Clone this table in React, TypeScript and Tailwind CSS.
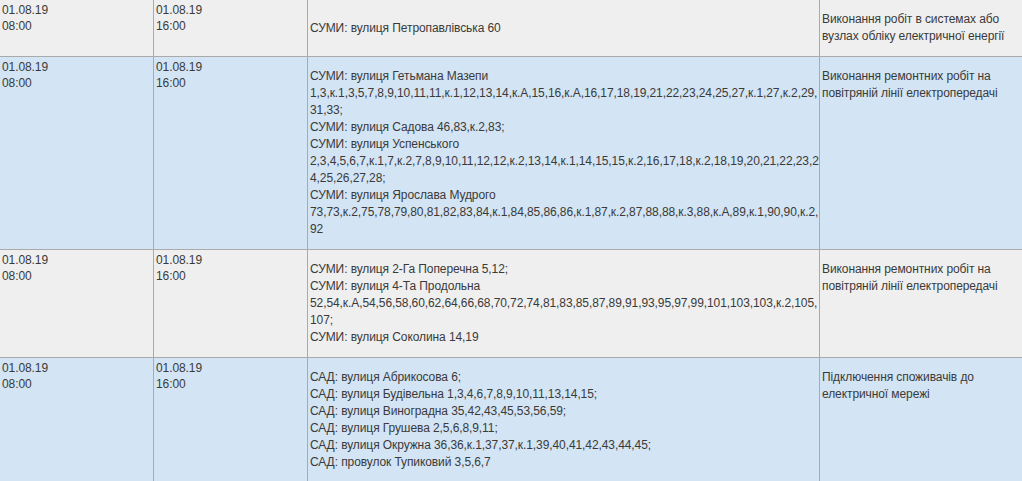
import React from 'react';

type Outage = {
  start: [string, string];
  end: [string, string];
  addresses: string[];
  work: string;
};

const outages: Outage[] = [
  {
    start: ['01.08.19', '08:00'],
    end: ['01.08.19', '16:00'],
    addresses: ['СУМИ: вулиця Петропавлівська 60'],
    work: 'Виконання робіт в системах або вузлах обліку електричної енергії',
  },
  {
    start: ['01.08.19', '08:00'],
    end: ['01.08.19', '16:00'],
    addresses: [
      'СУМИ: вулиця Гетьмана Мазепи',
      '1,3,к.1,3,5,7,8,9,10,11,11,к.1,12,13,14,к.А,15,16,к.А,16,17,18,19,21,22,23,24,25,27,к.1,27,к.2,29,',
      '31,33;',
      'СУМИ: вулиця Садова 46,83,к.2,83;',
      'СУМИ: вулиця Успенського',
      '2,3,4,5,6,7,к.1,7,к.2,7,8,9,10,11,12,12,к.2,13,14,к.1,14,15,15,к.2,16,17,18,к.2,18,19,20,21,22,23,2',
      '4,25,26,27,28;',
      'СУМИ: вулиця Ярослава Мудрого',
      '73,73,к.2,75,78,79,80,81,82,83,84,к.1,84,85,86,86,к.1,87,к.2,87,88,88,к.3,88,к.А,89,к.1,90,90,к.2,',
      '92',
    ],
    work: 'Виконання ремонтних робіт на повітряній лінії електропередачі',
  },
  {
    start: ['01.08.19', '08:00'],
    end: ['01.08.19', '16:00'],
    addresses: [
      'СУМИ: вулиця 2-Га Поперечна 5,12;',
      'СУМИ: вулиця 4-Та Продольна',
      '52,54,к.А,54,56,58,60,62,64,66,68,70,72,74,81,83,85,87,89,91,93,95,97,99,101,103,103,к.2,105,',
      '107;',
      'СУМИ: вулиця Соколина 14,19',
    ],
    work: 'Виконання ремонтних робіт на повітряній лінії електропередачі',
  },
  {
    start: ['01.08.19', '08:00'],
    end: ['01.08.19', '16:00'],
    addresses: [
      'САД: вулиця Абрикосова 6;',
      'САД: вулиця Будівельна 1,3,4,6,7,8,9,10,11,13,14,15;',
      'САД: вулиця Виноградна 35,42,43,45,53,56,59;',
      'САД: вулиця Грушева 2,5,6,8,9,11;',
      'САД: вулиця Окружна 36,36,к.1,37,37,к.1,39,40,41,42,43,44,45;',
      'САД: провулок Тупиковий 3,5,6,7',
    ],
    work: 'Підключення споживачів до електричної мережі',
  },
];

export default function App() {
  return (
    <div className="w-full overflow-hidden bg-white text-[12px] tracking-[-0.09px] text-[#3a3a3a] [font-family:'Liberation_Sans',Arial,sans-serif]">
      {outages.map((row, idx) => (
        <div
          key={idx}
          className={`grid grid-cols-[154px_154px_512px_1fr] border-b border-[#aaaaaa] ${
            idx % 2 === 0 ? 'bg-[#efefef]' : 'bg-[#d3e4f4]'
          }`}
        >
          <div className="border-r border-[#aaaaaa] pl-[2px] pt-[2px] leading-[16px]">
            {row.start[0]}
            <br />
            {row.start[1]}
          </div>
          <div className="border-r border-[#aaaaaa] pl-[2px] pt-[2px] leading-[16px]">
            {row.end[0]}
            <br />
            {row.end[1]}
          </div>
          <div className="flex flex-col justify-center border-r border-[#aaaaaa] py-[11px] pl-[2px] leading-[17px]">
            {row.addresses.map((line, i) => (
              <div key={i} className="whitespace-nowrap">{line}</div>
            ))}
          </div>
          <div className="py-[11px] pl-[2px] pr-[2px] leading-[17px]">{row.work}</div>
        </div>
      ))}
    </div>
  );
}
